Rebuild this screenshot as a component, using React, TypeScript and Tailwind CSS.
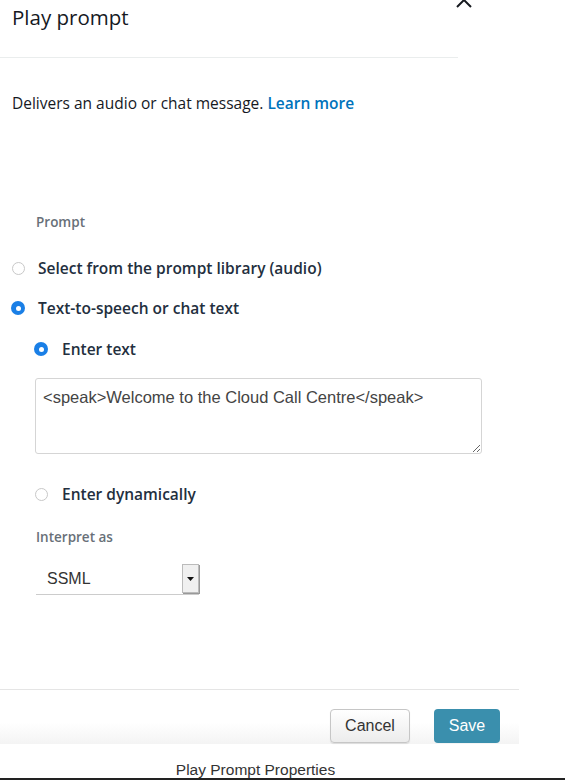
import React from "react";

function Radio({ checked }: { checked?: boolean }) {
  if (checked) {
    return (
      <span className="flex h-[14px] w-[14px] items-center justify-center rounded-full bg-[#1a7fe6]">
        <span className="h-[5px] w-[5px] rounded-full bg-white" />
      </span>
    );
  }
  return <span className="block h-[13px] w-[13px] rounded-full border border-[#c8c8c8] bg-white" />;
}

export default function App() {
  return (
    <div
      className="relative h-[780px] w-[565px] overflow-hidden bg-white text-[#232f3e]"
      style={{ fontFamily: '"Open Sans", "Noto Sans", sans-serif' }}
    >
      {/* header */}
      <div className="relative h-[57px] px-3 pt-[3px]">
        <h1 className="text-[20.5px] leading-[28px] text-[#16191f]">Play prompt</h1>
        <svg
          className="absolute left-[455px] top-[-9px]"
          width="18"
          height="18"
          viewBox="0 0 18 18"
          fill="none"
          stroke="#16191f"
          strokeWidth="2"
        >
          <path d="M2 2l14 14M16 2L2 16" />
        </svg>
      </div>
      <div className="h-px w-[458px] bg-[#eaeded]" />

      <p className="ml-3 mt-[35px] text-[15.5px] leading-[20px] text-[#16191f]">
        Delivers an audio or chat message.{" "}
        <span className="font-semibold text-[#0073bb]">Learn more</span>
      </p>

      <div className="ml-[36px] mt-[100px] text-[13.5px] leading-[18px] font-semibold text-[#687078]">Prompt</div>

      <div className="mt-[27px] ml-[12px] flex items-center gap-[13px]">
        <Radio />
        <span className="text-[15.5px] leading-[20px] font-semibold">Select from the prompt library (audio)</span>
      </div>
      <div className="mt-[20px] ml-[11px] flex items-center gap-[13px]">
        <Radio checked />
        <span className="text-[15.5px] leading-[20px] font-semibold">Text-to-speech or chat text</span>
      </div>
      <div className="mt-[21px] ml-[34px] flex items-center gap-[14px]">
        <Radio checked />
        <span className="text-[15.5px] leading-[20px] font-semibold">Enter text</span>
      </div>

      <textarea
        readOnly
        defaultValue="<speak>Welcome to the Cloud Call Centre</speak>"
        className="ml-[35px] mt-[19px] block h-[76px] w-[447px] rounded-[3px] border border-[#d5d5d5] px-[7px] pt-[9px] pb-[8px] text-[16.5px] leading-[18px] text-[#444] outline-none"
        style={{ fontFamily: '"Liberation Sans", Arial, sans-serif' }}
      />

      <div className="mt-[30px] ml-[35px] flex items-center gap-[14px]">
        <Radio />
        <span className="text-[15.5px] leading-[20px] font-semibold">Enter dynamically</span>
      </div>

      <div className="ml-[36px] mt-[24px] text-[13.5px] leading-[18px] font-semibold text-[#687078]">Interpret as</div>

      <div className="ml-[36px] mt-[17px] flex h-[32px] w-[163px] items-stretch border-b border-[#ccc]">
        <span
          className="flex-1 pl-[11px] pt-[4px] text-[16px] text-[#333]"
          style={{ fontFamily: '"Liberation Sans", Arial, sans-serif' }}
        >
          SSML
        </span>
        <span className="my-px flex w-[17px] items-center justify-center border border-[#bbb] bg-[#f0f0f0] shadow-[1px_1px_0_#999]">
          <svg width="7" height="4" viewBox="0 0 7 4">
            <path d="M0 0h7L3.5 4z" fill="#111" />
          </svg>
        </span>
      </div>

      {/* footer */}
      <div className="mt-[94px] h-px w-[519px] bg-[#e5e5e5]" />
      <div className="flex h-[54px] w-[519px] items-start justify-end gap-[24px] bg-gradient-to-b from-white from-60% to-[#f4f4f4] pr-[19px] pt-[19px]">
        <button
          className="h-[34px] w-[80px] rounded-[4px] border border-[#c6c6c6] bg-gradient-to-b from-white to-[#ececec] text-[16px] text-[#333] shadow-[0_1px_1px_rgba(0,0,0,0.1)]"
          style={{ fontFamily: '"Liberation Sans", Arial, sans-serif' }}
        >
          Cancel
        </button>
        <button
          className="h-[34px] w-[66px] rounded-[4px] bg-[#3a8fad] text-[16px] text-white"
          style={{ fontFamily: '"Liberation Sans", Arial, sans-serif' }}
        >
          Save
        </button>
      </div>

      <div
        className="mt-[17px] w-[511px] text-center text-[15.5px] leading-[18px] text-[#333]"
        style={{ fontFamily: '"Liberation Sans", Arial, sans-serif' }}
      >
        Play Prompt Properties
      </div>
      <div className="absolute bottom-0 left-0 h-[2px] w-full bg-[#222]" />
    </div>
  );
}
